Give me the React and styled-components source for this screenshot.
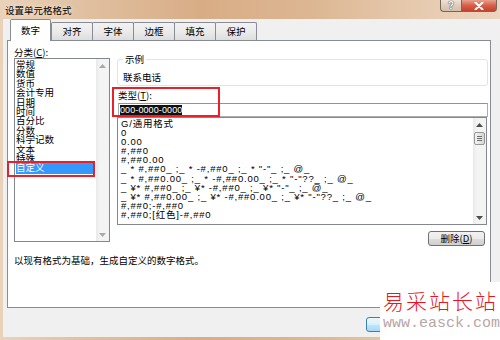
import React from 'react';
import styled, { createGlobalStyle, css } from 'styled-components';

const CJK = `"Noto Sans CJK SC", "Liberation Sans", sans-serif`;

const GlobalStyle = createGlobalStyle`
    html, body {
        margin: 0;
        padding: 0;
    }
    body {
        width: 500px;
        height: 340px;
        overflow: hidden;
        background: #f0f0f0;
        font-family: ${CJK};
    }
`;

const categories = ['常规', '数值', '货币', '会计专用', '日期', '时间', '百分比', '分数', '科学记数', '文本', '特殊', '自定义'];

const formats = [
    'G/通用格式',
    '0',
    '0.00',
    '#,##0',
    '#,##0.00',
    '_ * #,##0_ ;_ * -#,##0_ ;_ * "-"_ ;_ @_',
    '_ * #,##0.00_ ;_ * -#,##0.00_ ;_ * "-"??_ ;_ @_',
    '_ ¥* #,##0_ ;_ ¥* -#,##0_ ;_ ¥* "-"_ ;_ @_',
    '_ ¥* #,##0.00_ ;_ ¥* -#,##0.00_ ;_ ¥* "-"??_ ;_ @_',
    '#,##0;-#,##0',
    '#,##0;[红色]-#,##0',
];

const tabs = ['数字', '对齐', '字体', '边框', '填充', '保护'];

const Arrow = ({ up, color }) => (
    <svg width="7" height="4" viewBox="0 0 7 4">
        <path d={up ? 'M0 4 L3.5 0 L7 4 Z' : 'M0 0 L3.5 4 L7 0 Z'} fill={color} />
    </svg>
);

const ScrollBar = ({ thumb, arrowColor }) => (
    <Scroll>
        <ScrollBtn><Arrow up color={arrowColor} /></ScrollBtn>
        <Track>
            {thumb && (
                <Thumb>
                    <Grip />
                    <Grip />
                    <Grip />
                </Thumb>
            )}
        </Track>
        <ScrollBtn><Arrow color={arrowColor} /></ScrollBtn>
    </Scroll>
);

export default function App() {
    return (
        <>
            <GlobalStyle />
            <Window>
                <TitleBar>
                    <Title>设置单元格格式</Title>
                    <Captions>
                        <HelpBtn>?</HelpBtn>
                        <CloseBtn>
                            <svg width="10" height="8" viewBox="0 0 10 8">
                                <path d="M1.5 0.5 L8.5 7.5 M8.5 0.5 L1.5 7.5" stroke="#fff" strokeWidth="2" strokeLinecap="round" />
                            </svg>
                        </CloseBtn>
                    </Captions>
                </TitleBar>
                <Client>
                    <TabStrip>
                        {tabs.map((t, i) => (
                            <Tab key={t} active={i === 0}>{t}</Tab>
                        ))}
                    </TabStrip>
                    <Panel>
                        <Columns>
                            <LeftCol>
                                <FieldLabel>分类(<u>C</u>):</FieldLabel>
                                <ListBox>
                                    <Items>
                                        {categories.map((c, i) => (
                                            <Item key={c} selected={i === categories.length - 1}>{c}</Item>
                                        ))}
                                    </Items>
                                    <ScrollBar arrowColor="#a9a9a9" />
                                </ListBox>
                            </LeftCol>
                            <RightCol>
                                <Group>
                                    <Legend>示例</Legend>
                                    <SampleText>联系电话</SampleText>
                                </Group>
                                <TypeLabel>类型(<u>T</u>):</TypeLabel>
                                <Input>
                                    <Selected>000-0000-0000</Selected>
                                </Input>
                                <FormatList>
                                    <FormatItems>
                                        {formats.map((f) => (
                                            <FormatRow key={f}>{f}</FormatRow>
                                        ))}
                                    </FormatItems>
                                    <ScrollBar thumb arrowColor="#4d4d4d" />
                                </FormatList>
                                <ButtonRow>
                                    <Button>删除(<u>D</u>)</Button>
                                </ButtonRow>
                            </RightCol>
                        </Columns>
                        <Description>以现有格式为基础，生成自定义的数字格式。</Description>
                        <Highlight left={-1} top={120} width={88} height={16} />
                        <Highlight left={104} top={46} width={108} height={30} />
                    </Panel>
                    <Footer>
                        <Button wide primary>确定</Button>
                        <Button wide>取消</Button>
                    </Footer>
                </Client>
                <Watermark>
                    <MarkTitle>易采站长站</MarkTitle>
                    <MarkUrl>www.easck.com</MarkUrl>
                </Watermark>
            </Window>
        </>
    );
}

const Window = styled.div`
    position: relative;
    width: 500px;
    height: 340px;
    display: flex;
    flex-direction: column;
    background: linear-gradient(90deg, #ead2ba 0%, #e0bf9f 18%, #d8ad86 40%, #dcb692 62%, #e6c9ad 82%, #ecd6c0 100%);
`;

const TitleBar = styled.div`
    height: 19px;
    display: flex;
    align-items: flex-start;
    padding-left: 5px;
`;

const Title = styled.div`
    font-size: 9.5px;
    line-height: 20px;
    color: #000;
    text-shadow: 0 0 5px rgba(255, 250, 240, 0.9);
`;

const Captions = styled.div`
    margin-left: auto;
    margin-right: 3px;
    display: flex;
`;

const captionBase = css`
    height: 12px;
    box-sizing: border-box;
    display: flex;
    align-items: center;
    justify-content: center;
    border: 1px solid #7a6656;
    border-top: none;
`;

const HelpBtn = styled.div`
    ${captionBase};
    width: 21px;
    border-right: none;
    border-bottom-left-radius: 4px;
    background: linear-gradient(180deg, #efe2d6 0%, #ddcbbb 55%, #d3bfae 100%);
    color: #fff;
    font-family: "Liberation Sans", sans-serif;
    font-weight: bold;
    font-size: 10px;
    text-shadow: 0 0 1px #333, 0 0 1px #333;
`;

const CloseBtn = styled.div`
    ${captionBase};
    width: 36px;
    border-bottom-right-radius: 4px;
    background: linear-gradient(180deg, #e9a08c 0%, #d6604a 50%, #c5412b 100%);
`;

const Client = styled.div`
    flex: 1;
    display: flex;
    flex-direction: column;
    margin-left: 3px;
    margin-bottom: 3px;
    background: #f0f0f0;
`;

const TabStrip = styled.div`
    height: 21px;
    display: flex;
    align-items: flex-end;
    padding-left: 7px;
`;

const Tab = styled.div`
    width: 42px;
    height: 18px;
    box-sizing: border-box;
    margin-left: -1px;
    border: 1px solid #898c95;
    border-bottom: none;
    border-radius: 2px 2px 0 0;
    background: linear-gradient(180deg, #f2f2f2 0%, #ebebeb 50%, #dddddd 100%);
    font-size: 9.5px;
    line-height: 16px;
    text-align: center;
    color: #000;

    ${(p) => p.active && css`
        width: 41px;
        height: 22px;
        margin-left: 0;
        margin-bottom: -1px;
        margin-right: 1px;
        position: relative;
        z-index: 1;
        background: #fff;
        line-height: 20px;
    `}
`;

const Panel = styled.div`
    position: relative;
    margin-left: 4px;
    width: 484px;
    height: 268px;
    box-sizing: border-box;
    border: 1px solid #898c95;
    background: #fff;
    padding: 5px 2px 0 6px;
`;

const Columns = styled.div`
    display: flex;
    gap: 7px;
`;

const LeftCol = styled.div`
    width: 96px;
    display: flex;
    flex-direction: column;
`;

const RightCol = styled.div`
    width: 371px;
    display: flex;
    flex-direction: column;
    padding-top: 8px;
`;

const FieldLabel = styled.div`
    font-size: 9.5px;
    line-height: 12px;
    height: 12px;
    color: #000;

    u {
        text-decoration: underline;
    }
`;

const ListBox = styled.div`
    height: 184px;
    box-sizing: border-box;
    border: 1px solid #828790;
    display: flex;
    background: #fff;
`;

const Items = styled.div`
    flex: 1;
    padding: 1px 3px 0 1px;
`;

const Item = styled.div`
    font-size: 9.5px;
    line-height: 9.4px;
    height: 9.4px;
    white-space: nowrap;
    color: #000;

    ${(p) => p.selected && css`
        background: #3399ff;
        color: #fff;
        padding: 1.5px 0;
        margin-top: -1.5px;
    `}
`;

const Scroll = styled.div`
    width: 13px;
    display: flex;
    flex-direction: column;
    background: linear-gradient(90deg, #e9e9e9 0%, #f4f4f4 30%, #f4f4f4 100%);
`;

const ScrollBtn = styled.div`
    height: 13px;
    display: flex;
    align-items: center;
    justify-content: center;
`;

const Track = styled.div`
    flex: 1;
    padding-top: 1px;
`;

const Thumb = styled.div`
    margin: 0 1px;
    height: 13px;
    box-sizing: border-box;
    border: 1px solid #979797;
    border-radius: 2px;
    background: linear-gradient(90deg, #f3f3f3 0%, #e6e6e6 50%, #d6d6d6 100%);
    display: flex;
    flex-direction: column;
    align-items: center;
    justify-content: center;
    gap: 1px;
`;

const Grip = styled.div`
    width: 5px;
    height: 1px;
    background: #707070;
`;

const Group = styled.fieldset`
    margin: 0;
    padding: 0 0 0 5px;
    height: 32px;
    box-sizing: border-box;
    min-width: 0;
    border: 1px solid #dde5ea;
    border-radius: 3px;
`;

const Legend = styled.legend`
    padding: 0 2px;
    margin-left: 0;
    font-size: 9.5px;
    line-height: 10px;
    color: #000;
`;

const SampleText = styled.div`
    margin-top: 8px;
    font-size: 9.5px;
    line-height: 11px;
    color: #000;
`;

const TypeLabel = styled(FieldLabel)`
    margin-top: 3px;
    padding-left: 1px;
`;

const Input = styled.div`
    margin-top: 2px;
    margin-left: 1px;
    height: 14px;
    box-sizing: border-box;
    border: 1px solid #abadb3;
    border-top-color: #8f939b;
    padding: 0 0 0 1px;
    display: flex;
    align-items: center;
    background: #fff;
`;

const Selected = styled.span`
    background: #111;
    color: #fff;
    font-family: "Liberation Sans", sans-serif;
    font-size: 9px;
    line-height: 11px;
    letter-spacing: 0.1px;
`;

const FormatList = styled.div`
    height: 108px;
    box-sizing: border-box;
    border: 1px solid #828790;
    display: flex;
    background: #fff;
    margin-right: 1px;
`;

const FormatItems = styled.div`
    flex: 1;
    padding: 1px 0 0 3px;
    overflow: hidden;
`;

const FormatRow = styled.div`
    font-family: "Liberation Sans", "Noto Sans CJK SC", sans-serif;
    font-size: 9.5px;
    letter-spacing: 0.8px;
    line-height: 9.1px;
    height: 9.1px;
    white-space: pre;
    color: #000;
`;

const ButtonRow = styled.div`
    display: flex;
    justify-content: flex-end;
    margin-top: 6px;
    padding-right: 3px;
`;

const Button = styled.div`
    width: ${(p) => (p.wide ? '60px' : '57px')};
    height: 15px;
    box-sizing: border-box;
    border: 1px solid ${(p) => (p.primary ? '#3c7fb1' : '#707070')};
    border-radius: 3px;
    background: ${(p) => (p.primary
        ? 'linear-gradient(180deg, #eaf6fd 0%, #d9f0fc 50%, #bee6fd 51%, #a7d9f5 100%)'
        : 'linear-gradient(180deg, #f2f2f2 0%, #ebebeb 50%, #dddddd 51%, #cfcfcf 100%)')};
    font-size: 9.5px;
    line-height: 13px;
    text-align: center;
    color: #000;
`;

const Description = styled.div`
    margin-top: 8px;
    font-size: 9.5px;
    line-height: 12px;
    color: #000;
`;

const Highlight = styled.div`
    position: absolute;
    left: ${(p) => p.left}px;
    top: ${(p) => p.top}px;
    width: ${(p) => p.width}px;
    height: ${(p) => p.height}px;
    box-sizing: border-box;
    border: 2px solid #e8202a;
    pointer-events: none;
`;

const Footer = styled.div`
    flex: 1;
    display: flex;
    justify-content: flex-end;
    align-items: flex-start;
    gap: 5px;
    padding: 9px 9px 0 0;
`;

const Watermark = styled.div`
    position: absolute;
    left: 380px;
    top: 282px;
    width: 120px;
    height: 58px;
    background: #fff;
    display: flex;
    flex-direction: column;
    padding-left: 3px;
    box-sizing: border-box;
`;

const MarkTitle = styled.div`
    margin-top: 6px;
    font-size: 21px;
    line-height: 24px;
    letter-spacing: 2px;
    color: #e8141e;
    font-weight: 300;
`;

const MarkUrl = styled.div`
    margin-top: 3px;
    font-family: "Liberation Mono", monospace;
    font-size: 15px;
    line-height: 17px;
    color: #b8a6a6;
`;
